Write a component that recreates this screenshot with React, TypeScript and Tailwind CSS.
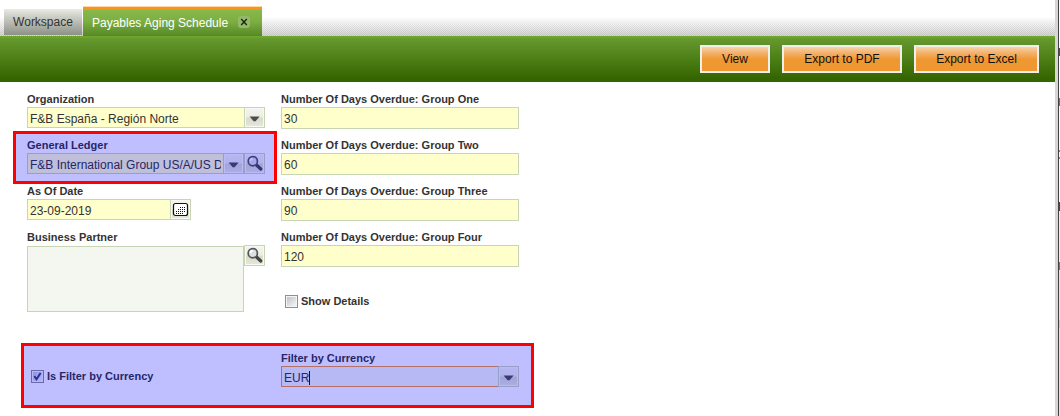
import type { ReactNode } from "react";

const Label = ({ children }: { children: ReactNode }) => (
  <div className="h-[15px] whitespace-nowrap text-[11px] leading-[15px] font-bold">{children}</div>
);

const IconButton = ({ children }: { children: ReactNode }) => (
  <div className="h-[21px] w-[21px] shrink-0 border border-[#c8d5b4] bg-[#f7f9f3] p-px">
    <div className="flex h-full w-full items-center justify-center bg-[linear-gradient(#f2f4ed_0%,#eceee5_48%,#d8dbc9_52%,#e4e7d9_100%)]">
      {children}
    </div>
  </div>
);

const Arrow = () => (
  <svg width="17" height="17" viewBox="0 0 17 17">
    <path d="M3.6 7.4h10L9.6 12.3h-2z" fill="#4d4d4d" />
  </svg>
);

const Magnifier = () => (
  <svg width="17" height="17" viewBox="0 0 17 17">
    <path d="M10.2 9.8l4.6 4.2" stroke="#444" strokeWidth="3.2" strokeLinecap="round" />
    <circle cx="6.8" cy="6.2" r="4.6" fill="#dcdfe0" stroke="#555" strokeWidth="1.7" />
    <path d="M4.3 6a2.6 2.6 0 0 1 2.5-2.4" stroke="#fff" strokeWidth="1.6" fill="none" />
  </svg>
);

const dots = [
  [7, 5], [9, 5], [11, 5], [5, 7], [7, 7], [9, 7], [11, 7],
  [3, 9], [5, 9], [7, 9], [9, 9], [11, 9], [3, 11], [5, 11], [7, 11], [9, 11],
];

const CalendarIcon = () => (
  <svg width="17" height="17" viewBox="0 0 17 17">
    <rect x="1.5" y="2.5" width="14" height="12" rx="2" fill="#fff" stroke="#111" strokeWidth="1.2" />
    {dots.map(([x, y]) => (
      <rect key={`${x}-${y}`} x={x + 1} y={y + 1} width="1" height="1" fill="#111" />
    ))}
  </svg>
);

const Field = ({ children }: { children?: ReactNode }) => (
  <div className="h-[21px] min-w-0 flex-1 overflow-hidden border border-r-0 border-[#c8d5b4] bg-[#ffffcc] pt-px pl-[2px] text-[12px] leading-[20px] whitespace-nowrap">
    {children}
  </div>
);

const NumberField = ({ label, value }: { label: string; value: string }) => (
  <div className="h-[46px]">
    <Label>{label}</Label>
    <div className="h-[22px] border border-[#c8d5b4] bg-[#ffffcc] pt-px pl-[2px] text-[12px] leading-[20px]">{value}</div>
  </div>
);

const Checkbox = ({ checked }: { checked?: boolean }) => (
  <div className="h-[13px] w-[13px] border border-[#8e8f8f] bg-[#f4f4f4] p-px">
    <div className="h-[9px] w-[9px] bg-linear-to-br from-[#bfc3cc] to-[#f6f6f6]">
      {checked && (
        <svg width="9" height="9" viewBox="0 0 9 9">
          <path d="M1.3 4.2l2.2 3L7.6 1" fill="none" stroke="#303f82" strokeWidth="2" />
        </svg>
      )}
    </div>
  </div>
);

const ToolbarButton = ({ children, width }: { children: ReactNode; width: string }) => (
  <div
    className={`${width} h-7 border-2 border-[#f0efec] bg-[linear-gradient(#f8dfc4_0%,#f3b26c_28%,#ef9730_52%,#ef9730_100%)] bg-origin-border text-center text-[12px] leading-[24px] text-[#111]`}
  >
    {children}
  </div>
);

export default function App() {
  return (
    <div className="flex h-[416px] w-[1060px] overflow-hidden bg-white font-['Liberation_Sans',Arial,sans-serif] text-[#333]">
      <div className="relative w-[1055px]">
        <div className="relative flex h-9 items-end pl-1">
          <div className="absolute inset-x-0 bottom-0 h-[19px] bg-[linear-gradient(to_bottom,#fff,rgba(255,255,255,0)),repeating-conic-gradient(#bcbcbc_0_25%,#dadada_0_50%)] bg-[size:100%_100%,2px_2px]" />
          <div className="relative mr-px mb-px h-[26px] w-[78px] bg-[linear-gradient(#e9ebe4_0%,#d0d3ca_25%,#8e9188_100%)] text-center text-[12px] leading-[26px]">
            Workspace
          </div>
          <div className="relative flex h-[30px] w-[179px] items-center border-t border-[#ffd9aa] bg-[linear-gradient(#f7941e_0_3px,#86b84b_3px,#7cae42_50%,#568825_100%)] pt-[3px] pl-[9px] text-[12px] text-white">
            <span className="w-[146px] leading-[22px] whitespace-nowrap">Payables Aging Schedule</span>
            <span className="-mt-[2px] flex h-3 w-3 items-center justify-center rounded-[3px] bg-[#94b96b]">
              <svg width="8" height="8" viewBox="0 0 8 8">
                <path d="M1.2 1l5.6 6M6.8 1L1.2 7" stroke="#172508" strokeWidth="1.3" />
              </svg>
            </span>
          </div>
        </div>

        <div className="flex h-[46px] justify-end gap-3 border-t-2 border-[#6ca52a] bg-[linear-gradient(#669a2f,#356500_92%)] bg-no-repeat pt-[7px] pr-4">
          <ToolbarButton width="w-[70px]">View</ToolbarButton>
          <ToolbarButton width="w-[120px]">Export to PDF</ToolbarButton>
          <ToolbarButton width="w-[125px]">Export to Excel</ToolbarButton>
        </div>

        <div className="grid grid-cols-[238px_238px] gap-x-4 pt-[10px] pl-[27px]">
          <div>
            <div className="h-[46px]">
              <Label>Organization</Label>
              <div className="flex">
                <Field>F&amp;B España - Región Norte</Field>
                <IconButton><Arrow /></IconButton>
              </div>
            </div>
            <div className="h-[46px]">
              <Label>General Ledger</Label>
              <div className="flex">
                <div className="flex h-[21px] min-w-0 flex-1 border border-r-0 border-[#c8d5b4] bg-[#ffffcc] pt-px pl-[2px] text-[12px] leading-[20px]">
                  <span className="w-[191px] overflow-hidden whitespace-nowrap">F&amp;B International Group US/A/US D</span>
                </div>
                <IconButton><Arrow /></IconButton>
                <div className="-ml-px flex pl-px"><IconButton><Magnifier /></IconButton></div>
              </div>
            </div>
            <div className="h-[46px]">
              <Label>As Of Date</Label>
              <div className="flex w-[164px]">
                <Field>23-09-2019</Field>
                <IconButton><CalendarIcon /></IconButton>
              </div>
            </div>
            <Label>Business Partner</Label>
            <div className="flex items-start">
              <div className="mt-px h-[66px] w-[217px] border border-[#c8d5b4] bg-[#f4f7f0]" />
              <IconButton><Magnifier /></IconButton>
            </div>
          </div>
          <div>
            <NumberField label="Number Of Days Overdue: Group One" value="30" />
            <NumberField label="Number Of Days Overdue: Group Two" value="60" />
            <NumberField label="Number Of Days Overdue: Group Three" value="90" />
            <NumberField label="Number Of Days Overdue: Group Four" value="120" />
            <div className="flex h-[75px] gap-[3px] pt-[19px] pl-1">
              <Checkbox />
              <div className="-mt-px"><Label>Show Details</Label></div>
            </div>
          </div>
          <div className="flex gap-[3px] pt-[19px] pl-1">
            <Checkbox checked />
            <div className="-mt-px"><Label>Is Filter by Currency</Label></div>
          </div>
          <div>
            <Label>Filter by Currency</Label>
            <div className="flex">
              <div className="flex h-[21px] flex-1 border border-r-0 border-[#f09535] bg-[#f4f7f0] pt-px pl-[2px] text-[12px] leading-[21px]">
                EUR<span className="mt-[3px] h-[14px] w-px bg-[#111]" />
              </div>
              <IconButton><Arrow /></IconButton>
            </div>
          </div>
        </div>

        <div className="absolute top-[131px] left-[13px] h-[53px] w-[264px] border-3 border-[#ff0000] bg-[#0000ff]/25 bg-clip-padding" />
        <div className="absolute top-[343px] left-[21px] h-[65px] w-[513px] border-3 border-[#ff0000] bg-[#0000ff]/25 bg-clip-padding" />
      </div>

      <div className="w-[3px] bg-[#d6d6d6]" />
      <div className="w-px bg-[#444]" />
      <div className="w-px bg-[linear-gradient(#fff_0_48px,#31508d_48px_56px,#fff_56px_98px,#5576ad_98px_106px,#fff_106px_150px,#888_150px_152px,#fff_152px_157px,#888_157px_159px,#fff_159px_202px,#445_202px_211px,#eee_211px_262px,#777_262px_270px,#e4e4e4_270px_320px,#d9d28c_320px_328px,#e0e0e0_328px)]" />
    </div>
  );
}
